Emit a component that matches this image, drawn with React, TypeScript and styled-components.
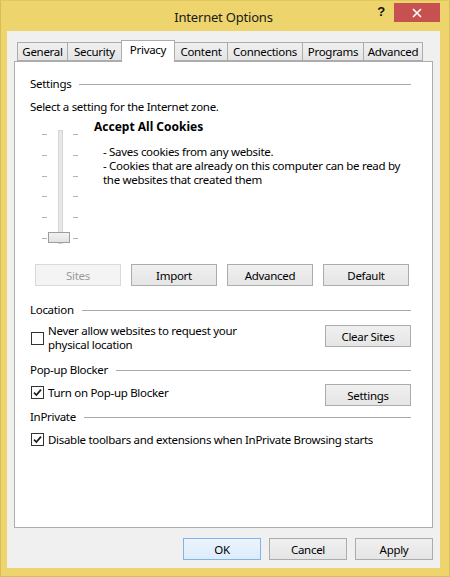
import React from 'react';
import styled, { createGlobalStyle } from 'styled-components';

const GlobalStyle = createGlobalStyle`
  html, body {
    margin: 0;
    padding: 0;
    background: #eed46c;
  }
  body {
    font-family: "Segoe UI", "Noto Sans", "Open Sans", sans-serif;
    font-size: 11.5px;
    letter-spacing: -0.3px;
    color: #000;
  }
`;

const tabs = [
  { label: 'General', width: 51 },
  { label: 'Security', width: 55 },
  { label: 'Privacy', width: 54 },
  { label: 'Content', width: 54 },
  { label: 'Connections', width: 76 },
  { label: 'Programs', width: 62 },
  { label: 'Advanced', width: 60 },
];

const App: React.FC = () => {
  return (
    <>
      <GlobalStyle />
      <Window>
        <TitleBar>
          <span />
          <Title>Internet Options</Title>
          <Controls>
            <Help>?</Help>
            <CloseButton>
              <svg width="10" height="10" viewBox="0 0 10 10">
                <path d="M1 1 L9 9 M9 1 L1 9" stroke="#fff" strokeWidth="1.6" />
              </svg>
            </CloseButton>
          </Controls>
        </TitleBar>

        <Client>
          <TabStrip>
            {tabs.map(t => (
              <Tab key={t.label} $width={t.width} $active={t.label === 'Privacy'}>
                {t.label}
              </Tab>
            ))}
          </TabStrip>

          <Panel>
            <GroupHeader>Settings</GroupHeader>
            <Intro>Select a setting for the Internet zone.</Intro>

            <LevelBlock>
              <Slider>
                <Ticks>
                  {[0, 1, 2, 3, 4, 5].map(i => <Tick key={i} />)}
                </Ticks>
                <Track />
                <Ticks>
                  {[0, 1, 2, 3, 4, 5].map(i => <Tick key={i} />)}
                </Ticks>
                <Thumb />
              </Slider>
              <LevelText>
                <LevelTitle>Accept All Cookies</LevelTitle>
                <LevelDesc>
                  <div>- Saves cookies from any website.</div>
                  <div>- Cookies that are already on this computer can be read by</div>
                  <div>the websites that created them</div>
                </LevelDesc>
              </LevelText>
            </LevelBlock>

            <ButtonRow>
              <Button disabled>Sites</Button>
              <Button>Import</Button>
              <Button>Advanced</Button>
              <Button>Default</Button>
            </ButtonRow>

            <GroupHeader $gap={16}>Location</GroupHeader>
            <OptionRow $gap={7}>
              <CheckLabel $lines={2}>
                <CheckBox checked={false} />
                <span>
                  Never allow websites to request your
                  <br />
                  physical location
                </span>
              </CheckLabel>
              <Button $offset={1}>Clear Sites</Button>
            </OptionRow>

            <GroupHeader $gap={10}>Pop-up Blocker</GroupHeader>
            <OptionRow $gap={7}>
              <CheckLabel $offset={1}>
                <CheckBox checked />
                <span>Turn on Pop-up Blocker</span>
              </CheckLabel>
              <Button>Settings</Button>
            </OptionRow>

            <GroupHeader $gap={3}>InPrivate</GroupHeader>
            <OptionRow $gap={8}>
              <CheckLabel>
                <CheckBox checked />
                <span>Disable toolbars and extensions when InPrivate Browsing starts</span>
              </CheckLabel>
            </OptionRow>
          </Panel>

          <Footer>
            <DialogButton $primary>OK</DialogButton>
            <DialogButton>Cancel</DialogButton>
            <DialogButton>Apply</DialogButton>
          </Footer>
        </Client>
      </Window>
    </>
  );
};

const CheckBox: React.FC<{ checked: boolean }> = ({ checked }) => (
  <Box>
    {checked && (
      <svg width="11" height="11" viewBox="0 0 11 11">
        <path d="M2 5.6 L4.4 8 L9 2.6" fill="none" stroke="#1c1c1c" strokeWidth="1.7" />
      </svg>
    )}
  </Box>
);

// 창 틀
const Window = styled.div`
  width: 450px;
  height: 577px;
  box-sizing: border-box;
  display: flex;
  flex-direction: column;
  background: #eed46c;
  border: 1px solid #d8bc55;
  border-top-color: #e2c75e;
  padding: 0 9px 8px 6px;
`;

const TitleBar = styled.div`
  height: 30px;
  display: grid;
  grid-template-columns: 1fr auto 1fr;
  align-items: start;
`;

const Title = styled.div`
  font-size: 13px;
  letter-spacing: -0.2px;
  line-height: 16px;
  margin-top: 8px;
  color: #1a1a1a;
`;

const Controls = styled.div`
  justify-self: end;
  display: flex;
  align-items: flex-start;
  gap: 9px;
`;

const Help = styled.span`
  font-family: "Liberation Sans", Arial, sans-serif;
  font-weight: 700;
  font-size: 13px;
  line-height: 14px;
  margin-top: 4px;
  color: #111;
`;

const CloseButton = styled.div`
  width: 46px;
  height: 19px;
  margin-top: 2px;
  background: #c75050;
  display: flex;
  align-items: center;
  justify-content: center;
`;

const Client = styled.div`
  flex: 1;
  display: flex;
  flex-direction: column;
  background: #f0f0f0;
  padding: 9px 7px 8px 7px;
`;

const TabStrip = styled.div`
  position: relative;
  z-index: 1;
  height: 22px;
  margin-bottom: -1px;
  padding-left: 3px;
  display: flex;
  align-items: flex-start;
`;

const Tab = styled.div<{ $width: number; $active?: boolean }>`
  box-sizing: border-box;
  width: ${p => p.$width}px;
  margin-right: -1px;
  border: 1px solid #acacac;
  display: flex;
  justify-content: center;
  height: ${p => (p.$active ? '22px' : '19px')};
  margin-top: ${p => (p.$active ? '0' : '2px')};
  line-height: 17px;
  background: ${p => (p.$active ? '#fff' : 'linear-gradient(#f0f0f0, #e5e5e5)')};
  border-bottom: ${p => (p.$active ? 'none' : '1px solid #acacac')};
  position: relative;
  z-index: ${p => (p.$active ? 2 : 1)};
`;

const Panel = styled.div`
  flex: 1;
  background: #fff;
  border: 1px solid #adadad;
  padding: 14px 21px 0 15px;
  display: flex;
  flex-direction: column;
`;

const GroupHeader = styled.div<{ $gap?: number }>`
  display: flex;
  align-items: center;
  gap: 8px;
  line-height: 15px;
  margin-top: ${p => p.$gap ?? 0}px;

  &::after {
    content: '';
    flex: 1;
    height: 1px;
    background: #a9a9a9;
    margin-top: 1px;
  }
`;

const Intro = styled.div`
  line-height: 15px;
  margin-top: 8px;
`;

const LevelBlock = styled.div`
  display: flex;
  margin-top: 5px;
`;

const Slider = styled.div`
  position: relative;
  box-sizing: border-box;
  width: 36px;
  height: 114px;
  margin: 11px 0 0 12px;
  display: grid;
  grid-template-columns: 5px 1fr 5px;
`;

const Ticks = styled.div`
  display: flex;
  flex-direction: column;
  justify-content: space-between;
  padding: 4px 0 5px;
`;

const Tick = styled.span`
  display: block;
  height: 1px;
  background: #b4b4b4;
`;

const Track = styled.div`
  justify-self: center;
  box-sizing: border-box;
  width: 5px;
  height: 100%;
  background: #e7e7e7;
  border: 1px solid #d6d6d6;
`;

const Thumb = styled.div`
  position: absolute;
  left: 6px;
  bottom: 1px;
  box-sizing: border-box;
  width: 22px;
  height: 11px;
  background: linear-gradient(#f2f2f2, #e3e3e3);
  border: 1px solid #9d9d9d;
`;

const LevelText = styled.div`
  margin-left: 16px;
`;

const LevelTitle = styled.div`
  font-weight: 700;
  font-size: 12px;
  letter-spacing: 0;
  line-height: 15px;
`;

const LevelDesc = styled.div`
  margin-top: 11px;
  padding-left: 9px;
  line-height: 14px;
`;

const ButtonRow = styled.div`
  display: flex;
  gap: 10px;
  margin-top: 20px;
  padding-left: 5px;
`;

const Button = styled.button<{ $offset?: number }>`
  box-sizing: border-box;
  width: 86px;
  height: 22px;
  padding: 0;
  margin-top: ${p => p.$offset ?? 0}px;
  font: inherit;
  letter-spacing: inherit;
  color: #000;
  background: linear-gradient(#f0f0f0, #e5e5e5);
  border: 1px solid #acacac;
  border-radius: 0;
  flex-shrink: 0;

  &:disabled {
    color: #9a9a9a;
    background: #f4f4f4;
    border-color: #d9d9d9;
  }
`;

const OptionRow = styled.div<{ $gap?: number }>`
  display: flex;
  justify-content: space-between;
  align-items: flex-start;
  margin-top: ${p => p.$gap ?? 0}px;
`;

const CheckLabel = styled.label<{ $lines?: number; $offset?: number }>`
  display: flex;
  align-items: center;
  gap: 4px;
  padding-left: 1px;
  margin-top: ${p => p.$offset ?? 0}px;
  line-height: ${p => (p.$lines === 2 ? '14px' : '15px')};
`;

const Box = styled.span`
  box-sizing: border-box;
  width: 13px;
  height: 13px;
  flex-shrink: 0;
  background: #fff;
  border: 1px solid #333;
  display: flex;
  align-items: center;
  justify-content: center;
`;

const Footer = styled.div`
  display: flex;
  justify-content: flex-end;
  gap: 8px;
  margin-top: 10px;
`;

const DialogButton = styled.button<{ $primary?: boolean }>`
  box-sizing: border-box;
  width: 78px;
  height: 22px;
  padding: 0;
  font: inherit;
  letter-spacing: inherit;
  color: #000;
  border-radius: 0;
  border: 1px solid ${p => (p.$primary ? '#7eb4ea' : '#acacac')};
  background: ${p => (p.$primary ? 'linear-gradient(#ecf4fc, #dcecfc)' : 'linear-gradient(#f0f0f0, #e5e5e5)')};
`;

export default App;
